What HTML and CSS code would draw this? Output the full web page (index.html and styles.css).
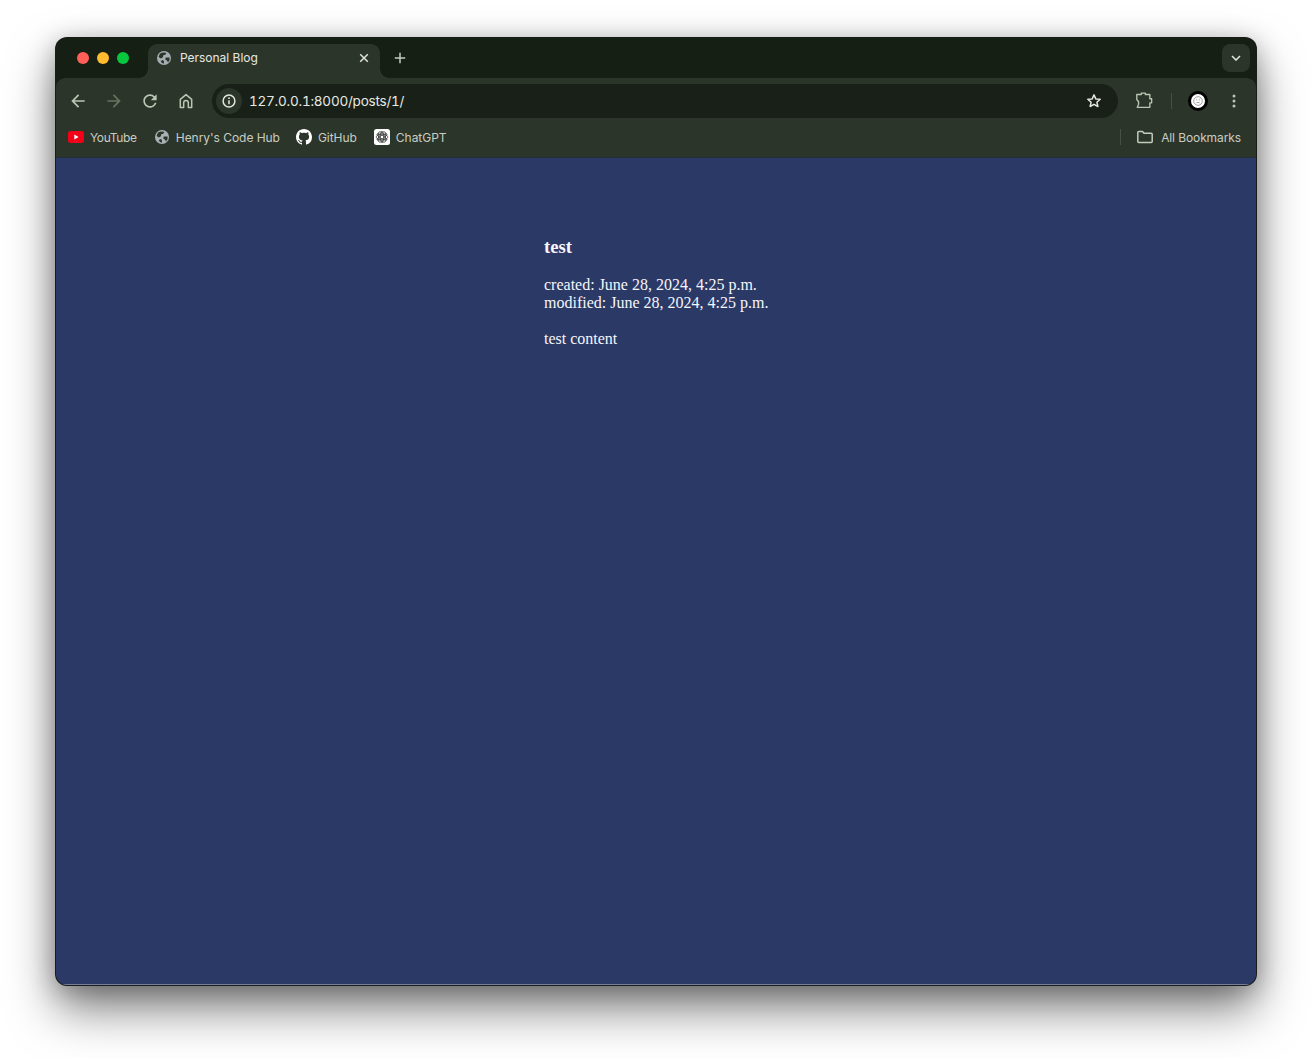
FILE: index.html
```html
<!DOCTYPE html>
<html lang="en">
<head>
<meta charset="utf-8">
<title>Personal Blog</title>
<link rel="stylesheet" href="styles.css">
</head>
<body>
<svg class="defs" width="0" height="0" aria-hidden="true">
  <defs>
    <symbol id="globe" viewBox="0 0 14 14"><circle cx="7" cy="7" r="7" fill="currentColor"/><path class="globe-land" d="M2.800 2.700Q6 .9 9.400 1.900L8.300 3.800 6.300 4.300 5.900 6.300 3.900 7.400 1.600 6.100z"/><path class="globe-land" d="M8.700 6.400l3.900.1q.7 3-1.500 5.100L9.900 9.600 8.200 8.600zM5.200 9.100l1.700.7.1 2.900Q4.800 12.500 3.700 10.500z"/></symbol>
  </defs>
</svg>
<div class="window">
  <header class="tabstrip">
    <div class="lights"><span class="light red"></span><span class="light amber"></span><span class="light green"></span></div>
    <div class="tab">
      <svg class="tab-icon" width="14" height="14"><use href="#globe"/></svg>
      <span class="tab-title">Personal Blog</span>
      <svg class="tab-close" width="10" height="10" viewBox="0 0 10 10"><path d="M1.200 1.200l7.600 7.600M8.800 1.200L1.200 8.800"/></svg>
    </div>
    <svg class="new-tab" width="12" height="12" viewBox="0 0 12 12"><path d="M6 .8v10.400M.8 6h10.400"/></svg>
    <div class="expander"><svg width="10" height="6" viewBox="0 0 10 6"><path d="M1 1l4 4 4-4"/></svg></div>
  </header>
  <div class="toolbar">
    <button class="tool"><svg width="20" height="20" viewBox="0 0 24 24"><path fill="currentColor" d="M20 11H7.830l5.590-5.590L12 4l-8 8 8 8 1.410-1.410L7.830 13H20z"/></svg></button>
    <button class="tool dim"><svg width="20" height="20" viewBox="0 0 24 24"><path fill="currentColor" d="M4 11h12.170l-5.590-5.590L12 4l8 8-8 8-1.410-1.410L16.170 13H4z"/></svg></button>
    <button class="tool"><svg width="20" height="20" viewBox="0 0 24 24"><path fill="currentColor" d="M17.650 6.350A7.958 7.958 0 0 0 12 4c-4.420 0-7.990 3.580-7.990 8s3.570 8 7.990 8c3.730 0 6.840-2.550 7.730-6h-2.080A5.990 5.990 0 0 1 12 18c-3.310 0-6-2.690-6-6s2.690-6 6-6c1.660 0 3.140.69 4.220 1.780L13 11h7V4l-2.350 2.350z"/></svg></button>
    <button class="tool"><svg width="16" height="16" viewBox="0 0 16 16"><path class="line" d="M2.300 14.600V6.400L8 1.600l5.700 4.800v8.200h-3.400V9.800a2.300 2.300 0 0 0-4.600 0v4.800z"/></svg></button>
    <div class="omnibox">
      <span class="site-info"><svg width="14" height="14" viewBox="0 0 14 14"><circle class="line" cx="7" cy="7" r="5.900"/><path class="line" d="M7 6.200v4"/><circle class="dot" cx="7" cy="4.200" r=".9"/></svg></span>
      <span class="url">127.0.0.1:8000/posts/1/</span>
      <svg class="star" width="16" height="16" viewBox="0 0 16 16"><path class="line" d="M8 1.900l1.800 4 4.400.4-3.300 2.900 1 4.300L8 11.300l-3.900 2.200 1-4.300-3.300-2.900 4.400-.4z"/></svg>
    </div>
    <button class="tool ext"><svg width="18" height="18" viewBox="0 0 20 20"><path class="line" d="M2 2.800H7V1.300H11.500V2.800H16.500V7.500H18.500V12H16.500V17H2.500L4 13.500Q4.500 10 2 8.500Z"/></svg></button>
    <span class="tool-sep"></span>
    <span class="avatar"><svg width="10" height="10" viewBox="0 0 10 10"><circle class="face" cx="5" cy="5" r="4.300"/><path class="face" d="M3 3.900h1.300M5.800 3.900h1.300M3.300 6.800q1.700-1 3.400 0"/></svg></span>
    <button class="tool menu"><svg width="4" height="14" viewBox="0 0 4 14"><circle cx="2" cy="2" r="1.500"/><circle cx="2" cy="7" r="1.500"/><circle cx="2" cy="12" r="1.500"/></svg></button>
  </div>
  <nav class="bookmarks">
    <a class="bookmark yt">
      <svg width="16" height="12" viewBox="0 0 16 12"><rect width="16" height="12" rx="3" fill="#f40019"/><path d="M6.300 3.500v5l4.300-2.500z" fill="#fff"/></svg>
      YouTube
    </a>
    <a class="bookmark hub">
      <svg class="globe-mark" width="14" height="14"><use href="#globe"/></svg>
      Henry's Code Hub
    </a>
    <a class="bookmark gh">
      <svg width="16" height="16" viewBox="0 0 16 16"><path fill="#fff" d="M8 0C3.580 0 0 3.580 0 8c0 3.540 2.290 6.530 5.470 7.590.4.070.55-.17.55-.38 0-.19-.01-.82-.01-1.490-2.010.37-2.530-.49-2.690-.94-.09-.23-.48-.94-.82-1.130-.28-.15-.68-.52-.01-.53.63-.01 1.080.58 1.230.82.72 1.210 1.870.87 2.330.66.07-.52.28-.87.51-1.070-1.780-.2-3.640-.89-3.640-3.950 0-.87.31-1.590.82-2.150-.08-.2-.36-1.020.08-2.120 0 0 .67-.21 2.200.82.64-.18 1.320-.27 2-.27.68 0 1.360.09 2 .27 1.530-1.040 2.200-.82 2.200-.82.44 1.100.16 1.920.08 2.120.51.56.82 1.270.82 2.150 0 3.070-1.870 3.750-3.650 3.950.29.25.54.73.54 1.480 0 1.070-.01 1.930-.01 2.200 0 .21.15.46.55.38A8.013 8.013 0 0 0 16 8c0-4.420-3.580-8-8-8z"/></svg>
      GitHub
    </a>
    <a class="bookmark">
      <svg width="16" height="16" viewBox="0 0 16 16"><rect width="16" height="16" rx="2.500" fill="#fff"/><g class="knot"><ellipse cx="8" cy="8" rx="5.800" ry="3"/><ellipse cx="8" cy="8" rx="5.800" ry="3" transform="rotate(60 8 8)"/><ellipse cx="8" cy="8" rx="5.800" ry="3" transform="rotate(120 8 8)"/><ellipse cx="8" cy="8" rx="5.800" ry="1.600" transform="rotate(30 8 8)"/><ellipse cx="8" cy="8" rx="5.800" ry="1.600" transform="rotate(90 8 8)"/><ellipse cx="8" cy="8" rx="5.800" ry="1.600" transform="rotate(150 8 8)"/></g></svg>
      ChatGPT
    </a>
    <span class="bookmark-sep"></span>
    <a class="bookmark all">
      <svg class="folder" width="16" height="14" viewBox="0 0 16 14"><path class="line" d="M.8 2.500a1 1 0 0 1 1-1h3.700l1.500 1.800h7.200a1 1 0 0 1 1 1v7.200a1 1 0 0 1-1 1H1.800a1 1 0 0 1-1-1z"/></svg>
      All Bookmarks
    </a>
  </nav>
  <main class="page">
    <h3 class="post-title">test</h3>
    <p class="post-dates">created: June 28, 2024, 4:25 p.m.<br>modified: June 28, 2024, 4:25 p.m.</p>
    <p class="post-body">test content</p>
  </main>
</div>
</body>
</html>
```
FILE: styles.css
```css
* { box-sizing: border-box; }
html, body { margin: 0; height: 100%; }
body {
  background: #fff;
  padding: 38px 56px 74px;
  font-family: Inter, "Liberation Sans", sans-serif;
  overflow: hidden;
}
.defs { display: block; height: 0; }
.window {
  height: 947px;
  border-radius: 11px;
  background: #161f14;
  overflow: hidden;
  display: flex;
  flex-direction: column;
  box-shadow: 0 0 0 1px #1a1c1a, 0 24px 48px rgba(0, 0, 0, .5), 0 4px 26px rgba(0, 0, 0, .28);
}
.tabstrip {
  height: 40px;
  flex: none;
  display: flex;
  align-items: flex-start;
  padding: 6px 6px 0 21px;
  background: #161f14;
}
.lights { display: flex; gap: 8px; height: 28px; align-items: center; }
.light { width: 12px; height: 12px; border-radius: 50%; }
.red { background: #ff5f57; }
.amber { background: #febc2e; }
.green { background: #08c73f; }
.tab {
  position: relative;
  width: 232px;
  height: 34px;
  margin-left: 19px;
  padding: 0 11px 6px 9px;
  display: flex;
  align-items: center;
  background: #2c352a;
  border-radius: 9px 9px 0 0;
}
.tab::before, .tab::after {
  content: "";
  position: absolute;
  bottom: 0;
  width: 9px;
  height: 9px;
}
.tab::before { left: -9px; background: radial-gradient(circle at 0 0, transparent 8.500px, #2c352a 9px); }
.tab::after { right: -9px; background: radial-gradient(circle at 100% 0, transparent 8.500px, #2c352a 9px); }
.tab-icon { color: #a7adb2; flex: none; }
.tab-title { margin: 0 0 2px 9px; font-size: 12px; letter-spacing: -.02px; color: #e6e9e3; flex: 1; white-space: nowrap; }
.tab-close { flex: none; }
.tab-close path { stroke: #dfe3dc; stroke-width: 1.500; fill: none; }
.globe-land { fill: #2c352a; }
.new-tab { margin: 8px 0 0 14px; flex: none; }
.new-tab path { stroke: #c3cdbd; stroke-width: 1.500; fill: none; }
.expander {
  margin-left: auto;
  width: 28px;
  height: 28px;
  border-radius: 8px;
  background: #2c352a;
  display: flex;
  align-items: center;
  justify-content: center;
}
.expander path { stroke: #dfe3dc; stroke-width: 1.600; fill: none; }
.toolbar {
  height: 44px;
  flex: none;
  display: flex;
  align-items: center;
  gap: 8px;
  padding: 2px 8px 0;
  background: #2c352a;
  border-radius: 9px 9px 0 0;
}
.tool {
  width: 28px;
  height: 28px;
  padding: 0;
  border: 0;
  background: none;
  color: #b9c6b3;
  display: flex;
  align-items: center;
  justify-content: center;
  flex: none;
}
.tool.dim { color: #67735f; }
.line { fill: none; stroke: currentColor; stroke-width: 1.500; stroke-linejoin: round; }
.dot { fill: currentColor; }
.omnibox {
  width: 906px;
  height: 34px;
  margin: 0 4px;
  flex: none;
  display: flex;
  align-items: center;
  padding: 0 16px 0 4px;
  border-radius: 17px;
  background: #182017;
  color: #e3e7e0;
}
.site-info {
  width: 26px;
  height: 26px;
  border-radius: 50%;
  background: #2c352a;
  display: flex;
  align-items: center;
  justify-content: center;
  flex: none;
}
.url { margin-left: 7px; flex: 1; font-size: 13.500px; letter-spacing: -.22px; font-variant-numeric: tabular-nums; color: #e6e9e3; }
.star { flex: none; }
.tool-sep { width: 1px; height: 16px; background: #465043; margin: 0 2px 0 5px; flex: none; }
.avatar {
  width: 20px;
  height: 20px;
  margin: 0 4px 0 6px;
  border-radius: 50%;
  border: 3px solid #000;
  background: #fff;
  display: flex;
  align-items: center;
  justify-content: center;
  flex: none;
}
.face { fill: none; stroke: #8a8a8a; stroke-width: .8; }
.menu circle { fill: #b9c6b3; }
.bookmarks {
  height: 36px;
  flex: none;
  display: flex;
  align-items: center;
  gap: 16px;
  padding: 0 15px 5px 12px;
  background: #2c352a;
  border-bottom: 1px solid #242c34;
}
.bookmark {
  display: flex;
  align-items: center;
  gap: 6px;
  font-size: 12px;
  letter-spacing: -.04px;
  color: #c7cdc3;
  white-space: nowrap;
}
.yt { letter-spacing: -.35px; }
.hub { gap: 7px; }
.gh { margin-right: 1px; }
.globe-mark { color: #aab0b6; margin-left: 2px; }
.knot { fill: none; stroke: #3a3a3a; stroke-width: .7; }
.bookmark-sep { margin-left: auto; width: 1px; height: 16px; background: #465043; }
.all { gap: 8px; letter-spacing: -.1px; }
.folder { color: #c3cdbd; }
.page {
  flex: 1;
  padding: 78px 0 0 488px;
  background: #2b3966;
  color: #f5f6fb;
  font-family: "Liberation Serif", serif;
  font-size: 16px;
  box-shadow: inset 0 -1px 0 rgba(255, 255, 255, .35);
}
.post-title { margin: 0 0 17.720px; font-size: 18.720px; font-weight: 700; }
.post-dates { margin: 0 0 18px; }
.post-body { margin: 0; }
```
